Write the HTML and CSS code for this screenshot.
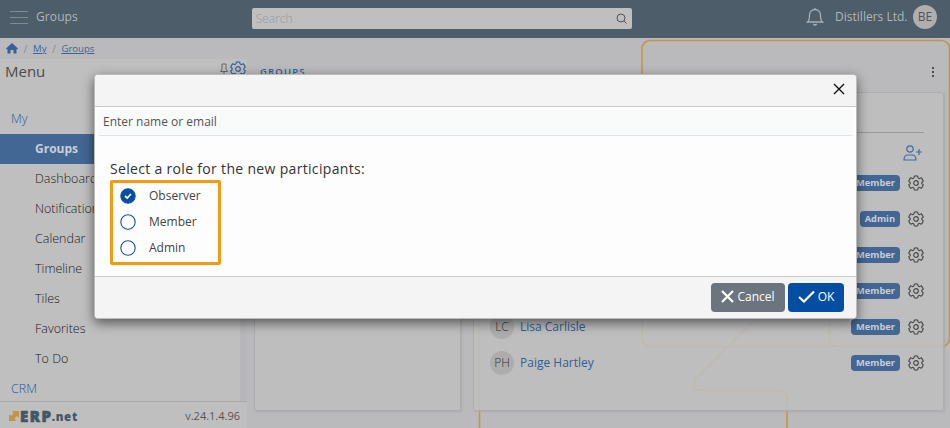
FILE: index.html
```html
<!DOCTYPE html>
<html lang="en">
<head>
<meta charset="utf-8">
<title>Groups</title>
<link rel="stylesheet" href="styles.css">
</head>
<body>
<svg width="0" height="0" class="defs">
  <symbol id="gear" viewBox="0 0 16 16"><path d="M6.3 1.200Q8 .5 9.700 1.200Q9.700 3.400 11.100 3.700Q12.200 3.200 13.200 2.800Q14.700 4.200 15.200 6.200Q13.700 7 13.700 8T15.200 9.800Q14.700 11.800 13.200 13.200Q12.200 12.800 11.100 12.300Q9.700 12.600 9.700 14.800Q8 15.500 6.300 14.800Q6.300 12.600 4.900 12.300Q3.800 12.800 2.800 13.200Q1.300 11.800 .8 9.800Q2.300 9 2.300 8T.8 6.200Q1.300 4.200 2.800 2.800Q3.800 3.200 4.900 3.700Q6.300 3.400 6.300 1.200Z"/><circle cx="8" cy="8" r="2.300"/></symbol>
</svg>
<svg class="decor" viewBox="0 0 950 428"><rect x="642" y="40.5" width="307.5" height="306" rx="8"/><path d="M479.5 300V428M829.5 300V338Q829.500 346 837 346M761 314L696 378Q690 390 702 390.500H780Q787 391 787 398V428"/></svg>
<header class="topbar">
  <svg class="burger" viewBox="0 0 20 16"><path d="M1 1.500H19M1 7.500H19M1 13.500H19"/></svg>
  <span class="app">Groups</span>
  <div class="search"><span>Search</span><svg viewBox="0 0 12 12"><circle cx="5" cy="5" r="4"/><path d="M8 8L10.500 10.500"/></svg></div>
  <svg class="bell" viewBox="0 0 18 20"><path d="M9 1V2.200M1.500 15H16.500Q14.500 13 14.500 10V8A5.500 5.500 0 0 0 3.500 8V10Q3.500 13 1.500 15ZM7.300 17Q9 19 10.700 17"/></svg>
  <span class="tenant">Distillers Ltd.</span>
  <span class="avatar">BE</span>
</header>
<nav class="crumbs">
  <svg viewBox="0 0 12 11"><path d="M6 0L12 5.500L11 6.500L10.500 6V10.500H7.500V7H4.500V10.500H1.500V6L1 6.500L0 5.500Z"/></svg>
  <i>/</i><a>My</a><i>/</i><a>Groups</a>
</nav>
<div class="page">
  <aside class="side">
    <div class="side-head"><span>Menu</span>
      <svg class="pin" viewBox="0 0 8 13"><path d="M2 1H6V6L7.500 8.500H.500L2 6ZM4 8.500V12.500"/></svg>
      <svg class="gear blue"><use href="#gear"/></svg></div>
    <div class="scroll"><ul>
      <li class="top">My</li><li class="active">Groups</li><li>Dashboards</li><li>Notifications</li><li>Calendar</li><li>Timeline</li><li>Tiles</li><li>Favorites</li><li>To Do</li><li class="top">CRM</li>
    </ul></div>
    <footer><div class="logo"><svg viewBox="0 0 12 12"><path d="M4 1H11V8L9 6L6.500 8.500L8 11H1V4L3 6L5.500 3.500Z"/></svg><b>ERP</b><small>.net</small></div><span>v.24.1.4.96</span></footer>
  </aside>
  <main>
    <div class="main-head"><b>GROUPS</b><svg viewBox="0 0 4 12"><circle cx="2" cy="2" r="1.100"/><circle cx="2" cy="6" r="1.100"/><circle cx="2" cy="10" r="1.100"/></svg></div>
    <div class="cards">
      <section class="card list"></section>
      <section class="card detail">
        <div class="rule"></div>
        <div class="add"><svg viewBox="0 0 20 16"><circle cx="7" cy="4" r="3.200"/><path d="M1 15Q1 10 5 10H9Q13 10 13 15ZM16 4V10M13 7H19"/></svg></div>
        <div class="row"><span class="badge">Member</span><svg class="gear"><use href="#gear"/></svg></div>
        <div class="row"><span class="badge">Admin</span><svg class="gear"><use href="#gear"/></svg></div>
        <div class="row"><span class="badge">Member</span><svg class="gear"><use href="#gear"/></svg></div>
        <div class="row"><span class="badge">Member</span><svg class="gear"><use href="#gear"/></svg></div>
        <div class="row"><span class="avatar">LC</span><a>Lisa Carlisle</a><span class="badge">Member</span><svg class="gear"><use href="#gear"/></svg></div>
        <div class="row"><span class="avatar">PH</span><a>Paige Hartley</a><span class="badge">Member</span><svg class="gear"><use href="#gear"/></svg></div>
      </section>
    </div>
  </main>
</div>
<div class="modal">
  <div class="modal-head"><svg viewBox="0 0 12 12"><path d="M1 1L11 11M11 1L1 11"/></svg></div>
  <div class="modal-body">
    <div class="input">Enter name or email</div>
    <p>Select a role for the new participants:</p>
    <div class="roles">
      <label><svg class="on" viewBox="0 0 16 16"><circle cx="8" cy="8" r="7.200"/><path d="M5 8L7.200 10L11 6"/></svg>Observer</label>
      <label><svg viewBox="0 0 16 16"><circle cx="8" cy="8" r="7.200"/></svg>Member</label>
      <label><svg viewBox="0 0 16 16"><circle cx="8" cy="8" r="7.200"/></svg>Admin</label>
    </div>
  </div>
  <div class="modal-foot">
    <button class="cancel"><svg viewBox="0 0 13 13"><path d="M1 1L12 12M12 1L1 12"/></svg>Cancel</button>
    <button class="ok"><svg viewBox="0 0 17 13"><path d="M1 7L6 11.500L16 1.500"/></svg>OK</button>
  </div>
</div>
</body>
</html>
```
FILE: styles.css
```css
* { box-sizing: border-box; }
body { margin: 0; width: 950px; height: 428px; overflow: hidden; position: relative; display: flex; flex-direction: column; background: #bababc; font: 300 13px/18px "Open Sans", sans-serif; color: #333; }
svg { fill: none; stroke: currentColor; flex: none; }
.defs { position: absolute; }
.decor { position: absolute; inset: 0; width: 950px; height: 428px; stroke: #c3944c; stroke-width: 1.6; }
.topbar { position: relative; height: 38px; flex: none; background: #4d5d69; color: #b1b6ba; display: flex; align-items: center; padding: 0 13px 4px 9px; font-weight: 400; }
.burger { width: 20px; height: 16px; color: #7f8b93; stroke-width: 1.2; margin-top: 2px; }
.app { margin-left: 7px; width: 216px; font-size: 12px; letter-spacing: .1px; font-weight: 500; }
.search { width: 381px; height: 21px; margin-top: 3px; background: #bfbfbf; border-radius: 2px; display: flex; align-items: center; justify-content: space-between; padding: 0 4px 0 4px; color: #999; font-size: 12px; font-weight: 300; }
.search svg { width: 12px; height: 12px; color: #555; stroke-width: 1; }
.bell { width: 18px; height: 20px; margin-left: 174px; color: #a9b0b6; stroke-width: 1.3; }
.tenant { margin-left: 11px; width: 78px; font-size: 12px; white-space: nowrap; }
.avatar { width: 24px; height: 24px; flex: none; border-radius: 50%; background: #adadad; color: #333; text-align: center; line-height: 24px; font-size: 12px; font-weight: 300; }
.topbar .avatar { font-weight: 400; color: #555; background: #afafaf; }
.crumbs { position: relative; height: 21px; flex: none; display: flex; align-items: center; padding-left: 6px; font-size: 10px; color: #3a659b; }
.crumbs svg { width: 12px; height: 11px; fill: #346198; stroke: none; }
.crumbs i { font-style: normal; color: #666; width: 15px; text-align: center; }
.crumbs a { text-decoration: underline; font-weight: 400; font-size: 9.6px; }
.page { position: relative; flex: 1; display: flex; min-height: 0; }
.side { width: 247px; background: #bfbfbf; display: flex; flex-direction: column; }
.side-head { height: 45px; display: flex; align-items: flex-start; padding: 1px 1px 0 5px; font-size: 15px; line-height: 22px; font-weight: 400; color: #4b4b4b; }
.side-head span { flex: 1; }
.pin { width: 8px; height: 13px; margin: 3px 2px 0 0; color: #666; }
.gear { width: 16px; height: 16px; color: #4c4c4c; stroke-width: 1.2; }
.blue { color: #346198; margin-top: 1px; }
.scroll { height: 297px; overflow: hidden; background: #b7b7bb; flex: none; }
ul { list-style: none; margin: 0; padding: 0; width: 240px; background: #bfbfbf; }
li { height: 30px; line-height: 30px; padding-left: 35px; font-size: 12.5px; color: #222; }
.top { padding-left: 11px; color: #245a9c; }
.active { background: #436794; color: #c8ced6; font-size: 12px; font-weight: 700; }
footer { height: 27px; border-top: 1px solid #aaa; display: flex; justify-content: space-between; align-items: center; padding: 2px 7px 0 8px; }
footer span { font-weight: 400; font-size: 11px; color: #555; }
.logo { display: flex; align-items: center; color: #445665; }
.logo svg { width: 12px; height: 12px; fill: #c49346; stroke: none; }
.logo b { font-size: 15px; font-weight: 800; -webkit-text-stroke: .7px; letter-spacing: 1.6px; }
.logo small { font-size: 11.5px; font-weight: 800; letter-spacing: .7px; margin-left: -1px; padding-top: 1px; }
main { flex: 1; padding-left: 7px; }
.main-head { height: 33px; display: flex; justify-content: space-between; padding: 4px 15px 0 6px; font-size: 9.5px; letter-spacing: 1.2px; color: #335f97; }
.main-head b { font-weight: 600; }
.main-head svg { width: 4px; height: 12px; fill: #333; stroke: none; margin-top: 3px; }
.cards { display: flex; gap: 12px; }
.card { height: 319px; background: rgba(191,191,191,.86); border: 1px solid #adadb0; border-radius: 3px; box-shadow: 1px 1px 2px #aaa; }
.list { width: 207px; }
.detail { width: 471px; padding: 0 19px 0 16px; }
.rule { height: 40px; border-bottom: 1px solid #999; }
.add { height: 33px; display: flex; justify-content: flex-end; padding: 12px 1px 0 0; margin-bottom: -1px; color: #416c9f; }
.add svg { width: 20px; height: 16px; stroke-width: 1.2; }
.row { height: 36px; display: flex; align-items: center; }
.row a { color: #2f5f98; font-size: 12px; font-weight: 400; margin-left: 6px; }
.badge { height: 16px; line-height: 16px; border-radius: 4px; padding: 0 5px; margin: 0 8px 0 auto; background: #436794; color: #c8ced6; font-size: 9.3px; font-weight: 700; }
.modal { position: absolute; left: 94px; top: 74px; width: 763px; height: 245px; background: #fdfdfd; border: 1px solid #bcbcbc; border-radius: 4px; overflow: hidden; box-shadow: 0 4px 12px rgba(0,0,0,.55); display: flex; flex-direction: column; color: #212529; }
.modal-head { height: 32px; background: #f4f4f4; border-bottom: 1px solid #c9c9c9; padding: 8px 11px; display: flex; justify-content: flex-end; }
.modal-head svg { width: 12px; height: 12px; color: #111; stroke-width: 1.4; }
.modal-body { height: 169px; padding: 3px 3px 0; }
.input { height: 26px; line-height: 24px; padding-left: 5px; border-bottom: 1px solid #dfe3ed; border-radius: 3px; background: #f9fafa; color: #555; font-size: 12px; font-weight: 400; }
p { margin: 23px 0 0 12px; line-height: 20px; font-size: 14px; font-weight: 400; letter-spacing: .32px; color: #333; }
.roles { width: 111px; height: 85px; margin: 1px 0 0 12px; border: 3px solid #f39c12; border-radius: 2px; padding-left: 7px; }
label { display: flex; align-items: center; height: 26px; gap: 13px; font-size: 12px; font-weight: 400; color: #444; }
label svg { width: 16px; height: 16px; color: #1553a5; stroke-width: 1.1; }
.on circle { fill: #034ea2; }
.on path { stroke: white; stroke-width: 1.7; }
.modal-foot { height: 42px; background: #f4f4f4; border-top: 1px solid #c9c9c9; display: flex; justify-content: flex-end; gap: 3px; padding: 6px 12px 0; }
button { height: 29px; border: 0; border-radius: 4px; color: white; font: 400 12px "Open Sans", sans-serif; display: flex; align-items: center; justify-content: center; gap: 3px; padding: 0 0 2px; }
button svg { stroke-width: 2.2; }
.cancel { width: 74px; background: #6c757d; }
.cancel svg { width: 13px; height: 13px; }
.ok { width: 56px; background: #034ea2; }
.ok svg { width: 17px; height: 13px; }
```
